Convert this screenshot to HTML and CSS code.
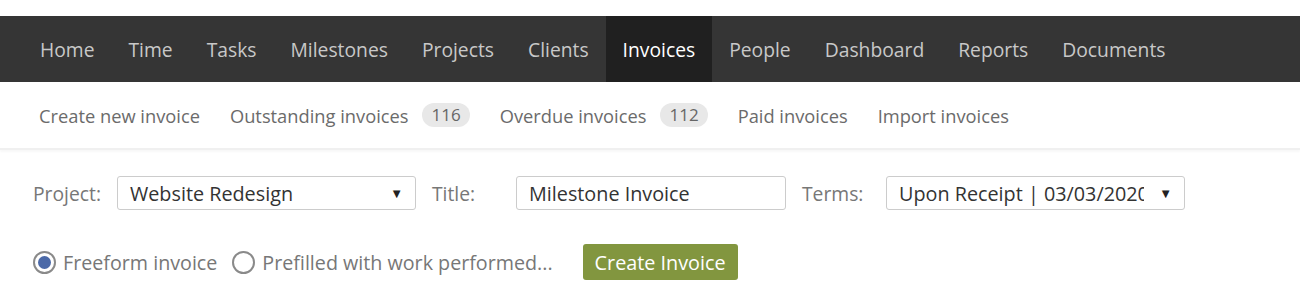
FILE: index.html
```html
<!DOCTYPE html>
<html>
<head>
<meta charset="utf-8">
<link rel="stylesheet" href="styles.css">
</head>
<body>
<nav class="topnav">
  <a class="nav-item">Home</a>
  <a class="nav-item">Time</a>
  <a class="nav-item">Tasks</a>
  <a class="nav-item">Milestones</a>
  <a class="nav-item">Projects</a>
  <a class="nav-item">Clients</a>
  <a class="nav-item active">Invoices</a>
  <a class="nav-item">People</a>
  <a class="nav-item">Dashboard</a>
  <a class="nav-item">Reports</a>
  <a class="nav-item">Documents</a>
</nav>
<div class="subnav">
  <a class="sub-item">Create new invoice</a>
  <a class="sub-item">Outstanding invoices <span class="badge">116</span></a>
  <a class="sub-item">Overdue invoices <span class="badge">112</span></a>
  <a class="sub-item">Paid invoices</a>
  <a class="sub-item">Import invoices</a>
</div>
<form class="invoice-form">
  <div class="row fields">
    <label class="lbl lbl-project">Project:</label>
    <div class="select sel-project"><span class="val">Website Redesign</span><span class="caret">▼</span></div>
    <label class="lbl lbl-title">Title:</label>
    <div class="input"><span class="val">Milestone Invoice</span></div>
    <label class="lbl lbl-terms">Terms:</label>
    <div class="select sel-terms"><span class="val clip">Upon Receipt | 03/03/2020</span><span class="caret">▼</span></div>
  </div>
  <div class="row options">
    <label class="radio"><span class="circle checked"></span>Freeform invoice</label>
    <label class="radio"><span class="circle"></span>Prefilled with work performed...</label>
    <button type="button" class="btn">Create Invoice</button>
  </div>
</form>
</body>
</html>
```
FILE: styles.css
```css
* { box-sizing: border-box; }
body {
  margin: 0;
  padding-top: 16px;
  background: #fff;
  font-family: "Open Sans", "Noto Sans", sans-serif;
}
.topnav {
  display: flex;
  height: 66px;
  background: #353535;
  padding-left: 23px;
}
.nav-item {
  display: flex;
  align-items: center;
  padding: 0 17px;
  color: #c8c8c8;
  font-size: 19.3px;
}
.nav-item.active {
  background: #202020;
  color: #fff;
}
.subnav {
  display: flex;
  align-items: center;
  height: 68px;
  padding-left: 39px;
  gap: 30px;
  border-bottom: 2px solid #f0f0f0;
  box-shadow: 0 2px 2px rgba(0,0,0,0.03);
}
.sub-item {
  display: flex;
  align-items: center;
  color: #6b6b6b;
  font-size: 18.3px;
}
.badge {
  display: inline-block;
  margin-left: 14px;
  height: 24px;
  line-height: 24px;
  padding: 0 9px;
  border-radius: 12px;
  background: #e8e8e8;
  color: #666;
  font-size: 17px;
}
.invoice-form {
  padding: 26px 0 0 33px;
}
.row {
  display: flex;
  align-items: center;
}
.fields { height: 34px; }
.lbl {
  color: #777;
  font-size: 19.3px;
}
.lbl-project { width: 84px; }
.lbl-title { width: 84px; margin-left: 16px; }
.lbl-terms { width: 84px; margin-left: 16px; }
.select, .input {
  display: flex;
  align-items: center;
  height: 34px;
  border: 1px solid #ccc;
  border-radius: 3px;
  padding: 0 12px;
  color: #333;
  font-size: 19.8px;
}
.select { width: 299px; justify-content: space-between; }
.input { width: 270px; }
.caret { font-size: 13px; color: #222; }
.clip {
  width: 245px;
  overflow: hidden;
  white-space: nowrap;
}
.options {
  margin-top: 34px;
  height: 36px;
}
.radio {
  display: flex;
  align-items: center;
  color: #777;
  font-size: 19.7px;
  margin-right: 15px;
}
.circle {
  width: 23px;
  height: 23px;
  border: 2px solid #8a8a8a;
  border-radius: 50%;
  margin-right: 7px;
  display: flex;
  align-items: center;
  justify-content: center;
}
.circle.checked::after {
  content: "";
  width: 13px;
  height: 13px;
  border-radius: 50%;
  background: #4b69a8;
}
.btn {
  margin-left: 15px;
  height: 36px;
  padding: 0 12px;
  border: 0;
  border-radius: 3px;
  background: #82963f;
  color: #fff;
  font-family: inherit;
  font-size: 19.8px;
}
```
